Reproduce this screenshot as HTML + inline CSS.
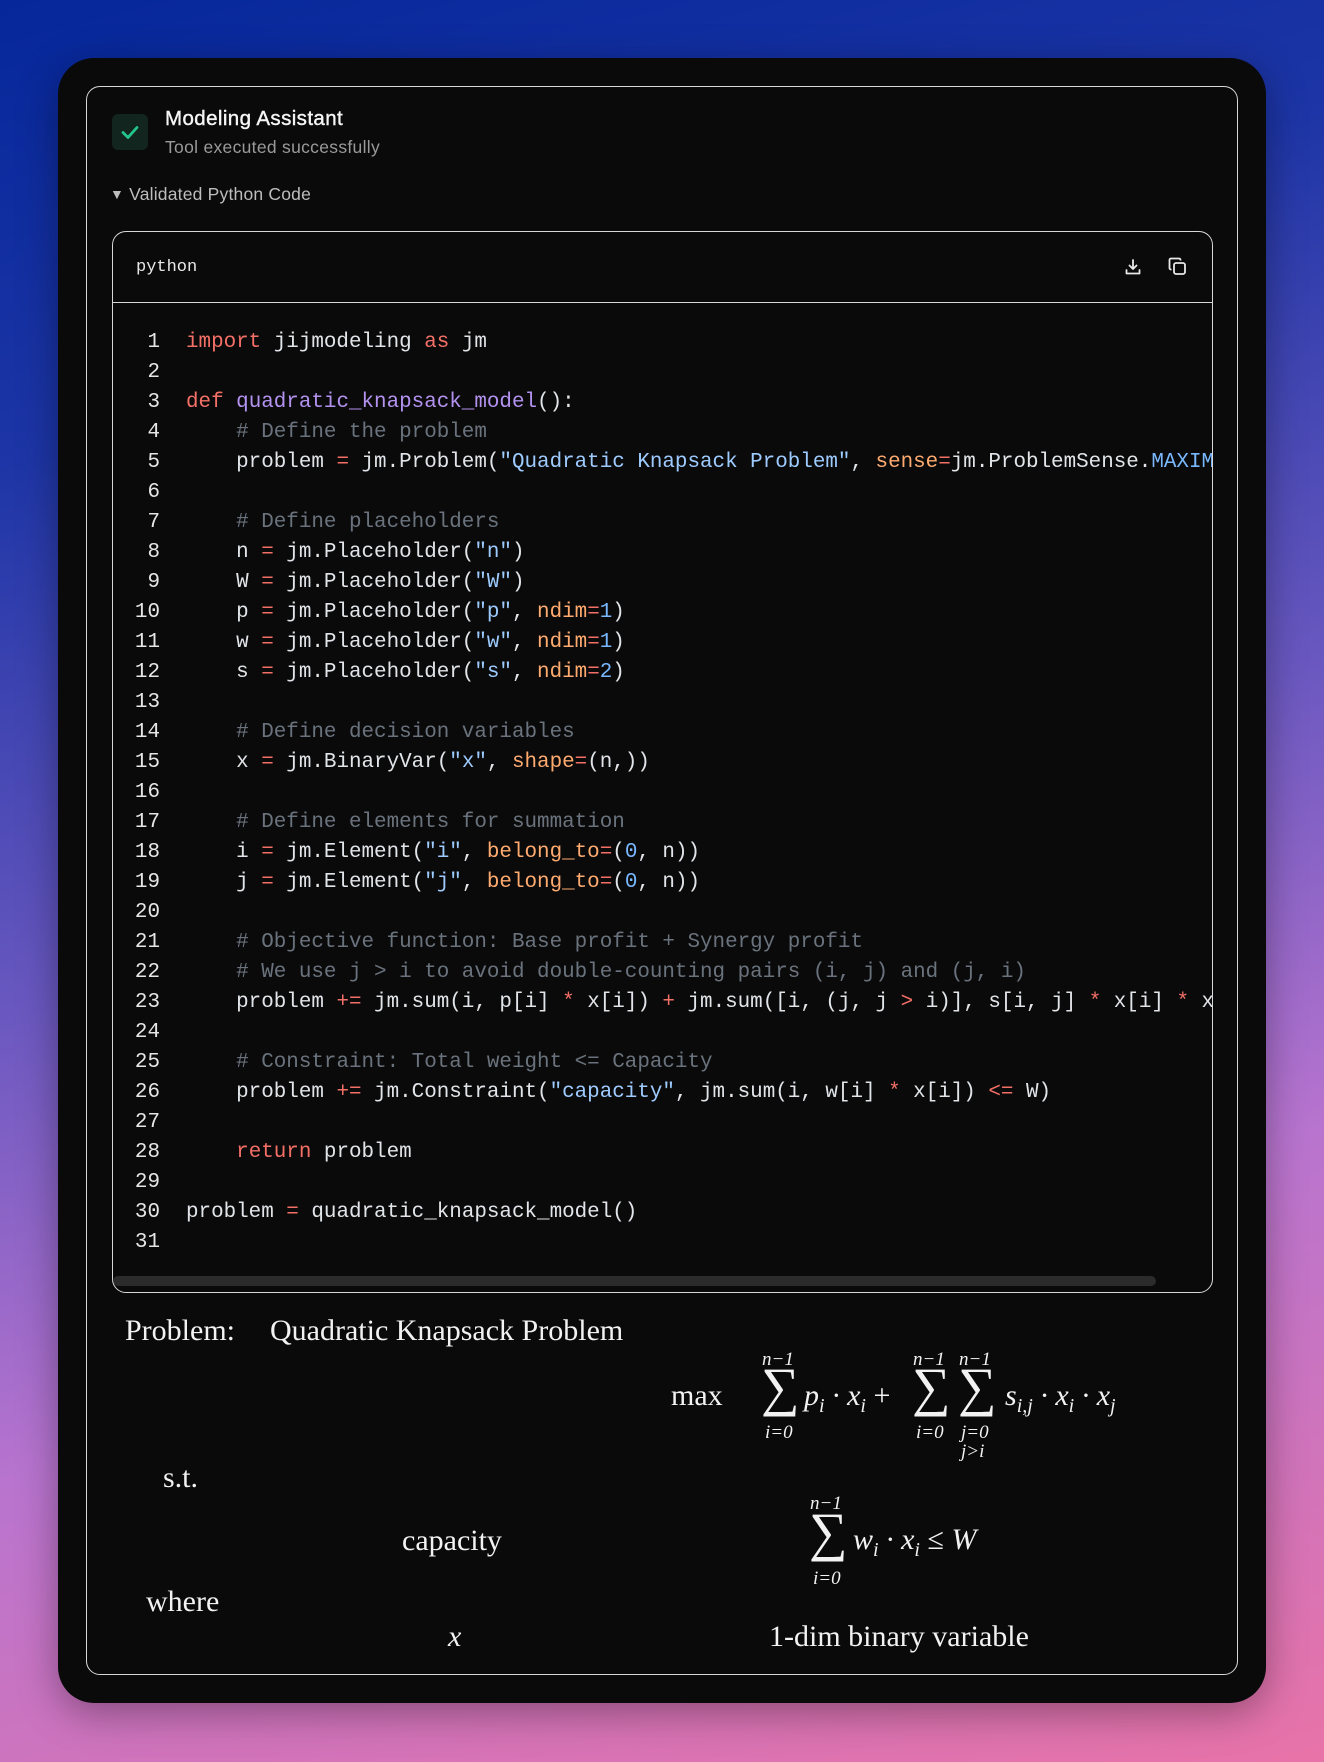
<!DOCTYPE html>
<html><head><meta charset="utf-8"><style>
*{margin:0;padding:0;box-sizing:border-box}
html,body{width:1324px;height:1762px;overflow:hidden}
body{background:linear-gradient(165deg,#05279a 0%,#1d35a6 22%,#6a58c0 48%,#b874cf 70%,#e873a8 100%);font-family:"Liberation Sans",sans-serif;position:relative}
.card{position:absolute;left:58px;top:58px;width:1208px;height:1645px;background:#0a0a0a;border-radius:36px;box-shadow:0 10px 40px rgba(0,0,0,.35)}
.inner{position:absolute;left:86px;top:86px;width:1152px;height:1589px;border:1.5px solid #d8d8d8;border-radius:14px}
.abs{position:absolute;white-space:nowrap}
.chk{left:112px;top:114px;width:36px;height:36px;background:#12261f;border-radius:6px}
.code{position:absolute;left:112px;top:231px;width:1101px;height:1062px;border:1.5px solid #d8d8d8;border-radius:14px;overflow:hidden}
.hdr{height:71px;border-bottom:1.5px solid #d8d8d8;position:relative}
pre{font-family:"Liberation Mono",monospace;font-size:20.9px;line-height:30px;color:#e1e4e8;position:absolute;left:0;top:96px;white-space:pre}
.ln{display:inline-block;width:47px;text-align:right;margin-right:26px;color:#e6e6e6}
.k{color:#f47067}.f{color:#b392f0}.s{color:#9ecbff}.p{color:#ffab70}.c{color:#6a737d}.n{color:#79b8ff}
.sb{position:absolute;left:0;top:1044px;width:1043px;height:10px;background:#2b2b2b;border-radius:5px}
.m{font-family:"Liberation Serif",serif;color:#f2f2f2;font-size:30px;line-height:34px}
.i{font-style:italic}
.sum{font-size:54px;line-height:1;font-style:normal}
.sm{font-size:19px;line-height:22px}
sub{font-size:20px}
</style></head><body>
<div class="card"></div>
<div class="inner"></div>
<div class="abs chk"><svg width="36" height="36" viewBox="0 0 36 36"><path d="M11 18.5l5 5 9-10" fill="none" stroke="#22c58b" stroke-width="2.8" stroke-linecap="round" stroke-linejoin="round"/></svg></div>
<div class="abs" style="left:165px;top:107px;font-size:20.5px;letter-spacing:.4px;color:#f5f5f5;-webkit-text-stroke:.4px #f5f5f5">Modeling Assistant</div>
<div class="abs" style="left:165px;top:137px;font-size:17.5px;letter-spacing:.3px;color:#9a9a9a">Tool executed successfully</div>
<div class="abs" style="left:110px;top:184px;font-size:17.5px;letter-spacing:.2px;color:#bdbdbd"><span style="font-size:14px;position:relative;top:-1px">▼</span> Validated Python Code</div>
<div class="code">
 <div class="hdr">
  <div class="abs" style="left:23px;top:26px;font-family:'Liberation Mono',monospace;font-size:17px;color:#e8e8e8">python</div>
  <svg class="abs" style="left:1010px;top:25px" width="20" height="20" viewBox="0 0 20 20" fill="none" stroke="#e8e8e8" stroke-width="1.8" stroke-linecap="round" stroke-linejoin="round"><path d="M10 3v9M6.5 8.5L10 12l3.5-3.5M3.5 13v3.5h13V13"/></svg>
  <svg class="abs" style="left:1054px;top:24px" width="21" height="21" viewBox="0 0 21 21" fill="none" stroke="#e8e8e8" stroke-width="1.8" stroke-linejoin="round"><rect x="7" y="7" width="11" height="11" rx="2"/><path d="M4.5 13.5h-.5a1.5 1.5 0 0 1-1.5-1.5V4A1.5 1.5 0 0 1 4 2.5h8A1.5 1.5 0 0 1 13.5 4v.5"/></svg>
 </div>
<pre><span class="ln">1</span><span class="k">import</span> jijmodeling <span class="k">as</span> jm
<span class="ln">2</span>
<span class="ln">3</span><span class="k">def</span> <span class="f">quadratic_knapsack_model</span>():
<span class="ln">4</span>    <span class="c"># Define the problem</span>
<span class="ln">5</span>    problem <span class="k">=</span> jm.Problem(<span class="s">"Quadratic Knapsack Problem"</span>, <span class="p">sense</span><span class="k">=</span>jm.ProblemSense.<span class="n">MAXIMIZE</span>)
<span class="ln">6</span>
<span class="ln">7</span>    <span class="c"># Define placeholders</span>
<span class="ln">8</span>    n <span class="k">=</span> jm.Placeholder(<span class="s">"n"</span>)
<span class="ln">9</span>    W <span class="k">=</span> jm.Placeholder(<span class="s">"W"</span>)
<span class="ln">10</span>    p <span class="k">=</span> jm.Placeholder(<span class="s">"p"</span>, <span class="p">ndim</span><span class="k">=</span><span class="n">1</span>)
<span class="ln">11</span>    w <span class="k">=</span> jm.Placeholder(<span class="s">"w"</span>, <span class="p">ndim</span><span class="k">=</span><span class="n">1</span>)
<span class="ln">12</span>    s <span class="k">=</span> jm.Placeholder(<span class="s">"s"</span>, <span class="p">ndim</span><span class="k">=</span><span class="n">2</span>)
<span class="ln">13</span>
<span class="ln">14</span>    <span class="c"># Define decision variables</span>
<span class="ln">15</span>    x <span class="k">=</span> jm.BinaryVar(<span class="s">"x"</span>, <span class="p">shape</span><span class="k">=</span>(n,))
<span class="ln">16</span>
<span class="ln">17</span>    <span class="c"># Define elements for summation</span>
<span class="ln">18</span>    i <span class="k">=</span> jm.Element(<span class="s">"i"</span>, <span class="p">belong_to</span><span class="k">=</span>(<span class="n">0</span>, n))
<span class="ln">19</span>    j <span class="k">=</span> jm.Element(<span class="s">"j"</span>, <span class="p">belong_to</span><span class="k">=</span>(<span class="n">0</span>, n))
<span class="ln">20</span>
<span class="ln">21</span>    <span class="c"># Objective function: Base profit + Synergy profit</span>
<span class="ln">22</span>    <span class="c"># We use j &gt; i to avoid double-counting pairs (i, j) and (j, i)</span>
<span class="ln">23</span>    problem <span class="k">+=</span> jm.sum(i, p[i] <span class="k">*</span> x[i]) <span class="k">+</span> jm.sum([i, (j, j <span class="k">&gt;</span> i)], s[i, j] <span class="k">*</span> x[i] <span class="k">*</span> x[j])
<span class="ln">24</span>
<span class="ln">25</span>    <span class="c"># Constraint: Total weight &lt;= Capacity</span>
<span class="ln">26</span>    problem <span class="k">+=</span> jm.Constraint(<span class="s">"capacity"</span>, jm.sum(i, w[i] <span class="k">*</span> x[i]) <span class="k">&lt;=</span> W)
<span class="ln">27</span>
<span class="ln">28</span>    <span class="k">return</span> problem
<span class="ln">29</span>
<span class="ln">30</span>problem <span class="k">=</span> quadratic_knapsack_model()
<span class="ln">31</span></pre>
 <div class="sb"></div>
</div>

<div class="abs m" style="left:125px;top:1314px">Problem:</div>
<div class="abs m" style="left:270px;top:1314px">Quadratic Knapsack Problem</div>

<div class="abs m" style="left:671px;top:1379px">max</div>
<div class="abs m i sm" style="left:762px;top:1349px">n−1</div>
<div class="abs m sum" style="left:761px;top:1360px">∑</div>
<div class="abs m i sm" style="left:765px;top:1422px">i=0</div>
<div class="abs m i" style="left:804px;top:1379px">p<sub>i</sub> · x<sub>i</sub> <span style="font-style:normal">+</span></div>
<div class="abs m i sm" style="left:913px;top:1349px">n−1</div>
<div class="abs m sum" style="left:912px;top:1360px">∑</div>
<div class="abs m i sm" style="left:916px;top:1422px">i=0</div>
<div class="abs m i sm" style="left:959px;top:1349px">n−1</div>
<div class="abs m sum" style="left:958px;top:1360px">∑</div>
<div class="abs m i sm" style="left:961px;top:1422px">j=0</div>
<div class="abs m i sm" style="left:961px;top:1441px">j&gt;i</div>
<div class="abs m i" style="left:1005px;top:1379px">s<sub>i,j</sub> · x<sub>i</sub> · x<sub>j</sub></div>

<div class="abs m" style="left:163px;top:1461px">s.t.</div>
<div class="abs m" style="left:402px;top:1524px">capacity</div>
<div class="abs m i sm" style="left:810px;top:1493px">n−1</div>
<div class="abs m sum" style="left:809px;top:1505px">∑</div>
<div class="abs m i sm" style="left:813px;top:1568px">i=0</div>
<div class="abs m i" style="left:853px;top:1523px">w<sub>i</sub> · x<sub>i</sub> <span style="font-style:normal">≤</span> W</div>

<div class="abs m" style="left:146px;top:1585px">where</div>
<div class="abs m i" style="left:448px;top:1620px">x</div>
<div class="abs m" style="left:769px;top:1620px">1-dim binary variable</div>
</body></html>
